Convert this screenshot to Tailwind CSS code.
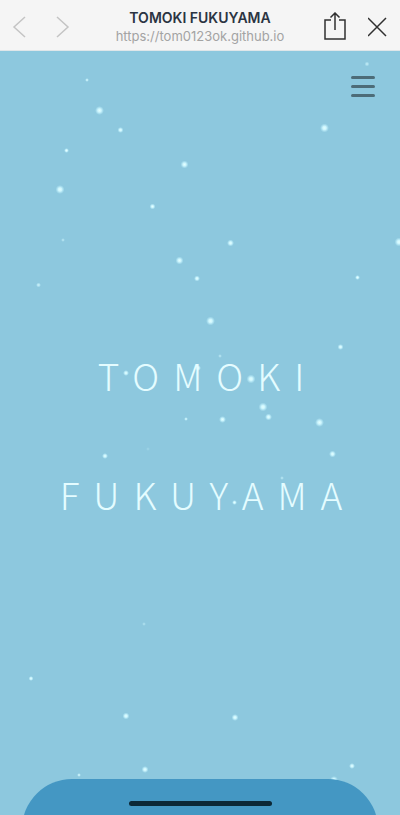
<!DOCTYPE html>
<html lang="ja">
<head>
  <meta charset="UTF-8" />
  <meta name="viewport" content="width=device-width, initial-scale=1.0" />
  <title>TOMOKI FUKUYAMA</title>
  <script src="https://cdn.jsdelivr.net/npm/@tailwindcss/browser@4"></script>
</head>
<body class="min-h-screen flex flex-col bg-[#8dc8de] font-['Inter','Liberation_Sans',sans-serif]">

  <!-- browser bar -->
  <header class="relative z-10 h-[51px] shrink-0 flex items-center justify-between px-3 bg-[#f5f5f5] border-b border-[#dfe6e9]">
    <nav class="flex gap-[30px] pt-1 text-[#c4c4c4]">
      <button type="button" aria-label="Back">
        <svg class="block w-[14px] h-[22px]" viewBox="0 0 14 22" fill="none" stroke="currentColor" stroke-width="1.5"><path d="M13 1 2 11l11 10" /></svg>
      </button>
      <button type="button" aria-label="Forward">
        <svg class="block w-[14px] h-[22px]" viewBox="0 0 14 22" fill="none" stroke="currentColor" stroke-width="1.5"><path d="M1 1l11 10L1 21" /></svg>
      </button>
    </nav>
    <div class="absolute inset-x-20 top-2 text-center">
      <p class="text-[14px] leading-[19px] font-semibold text-[#2b3442]">TOMOKI FUKUYAMA</p>
      <p class="text-[13px] leading-[18px] text-[#a3a3a3]">https://tom0123ok.github.io</p>
    </div>
    <div class="flex items-center gap-5 pt-1 text-[#303030]">
      <button type="button" aria-label="Share">
        <svg class="block w-[24px] h-[30px]" viewBox="0 0 24 30" fill="none" stroke="currentColor" stroke-width="1.5"><path d="M7 8H1v19h20V8h-6M11 18V1M6.500 5.500 11 1l4.500 4.500" /></svg>
      </button>
      <button type="button" aria-label="Close">
        <svg class="block w-[20px] h-[20px]" viewBox="0 0 20 20" fill="none" stroke="currentColor" stroke-width="1.5"><path d="M0 1l18 18M18 1 0 19" /></svg>
      </button>
    </div>
  </header>

  <main class="relative flex-1 flex flex-col overflow-hidden">
    <!-- snow -->
    <svg class="absolute inset-0 w-full h-full" viewBox="0 51 400 764" preserveAspectRatio="xMidYMid slice" aria-hidden="true">
      <defs>
        <radialGradient id="flake">
          <stop offset="0" stop-color="#e4ffff" />
          <stop offset="0.400" stop-color="#ccf5fd" />
          <stop offset="1" stop-color="#b8ecfa" stop-opacity="0" />
        </radialGradient>
      </defs>
      <g fill="url(#flake)">
        <circle cx="99.500" cy="110.500" r="4.500" />
        <circle cx="324.500" cy="128" r="4.500" />
        <circle cx="60" cy="189.500" r="4.500" />
        <circle cx="210.500" cy="321" r="4.500" />
        <circle cx="399" cy="242" r="4.500" />
        <circle cx="251" cy="379" r="4.500" />
        <circle cx="263" cy="407" r="4.500" />
        <circle cx="319.500" cy="422.500" r="4.500" />
        <circle cx="198" cy="368" r="3" />
        <circle cx="184.500" cy="164.500" r="4" />
        <circle cx="179.500" cy="260.500" r="4" />
        <circle cx="230.500" cy="243" r="3.500" />
        <circle cx="222.500" cy="419.500" r="3.500" />
        <circle cx="268.500" cy="417" r="3.500" />
        <circle cx="332.500" cy="454" r="3.500" />
        <circle cx="126" cy="373" r="3" />
        <circle cx="126" cy="716" r="3.500" />
        <circle cx="235" cy="717.500" r="3.500" />
        <circle cx="145" cy="769.500" r="3.500" />
        <circle cx="105" cy="456" r="3" />
        <circle cx="340.500" cy="347" r="3" />
        <circle cx="352" cy="766" r="3" />
        <circle cx="334" cy="780" r="4" />
        <circle cx="152.500" cy="206.500" r="3" />
        <circle cx="197" cy="278.500" r="3" />
        <circle cx="120.500" cy="130" r="3" />
        <circle cx="357.500" cy="277.500" r="2.500" />
        <circle cx="66.500" cy="150.500" r="2.500" />
        <circle cx="31" cy="678.500" r="2.500" />
        <circle cx="234.500" cy="502.500" r="2.500" />
        <circle cx="38.500" cy="285" r="2.500" opacity="0.700" />
        <circle cx="367" cy="64" r="2.500" opacity="0.600" />
        <circle cx="87" cy="80" r="2" opacity="0.800" />
        <circle cx="79" cy="775" r="2" opacity="0.800" />
        <circle cx="186" cy="419" r="2" opacity="0.800" />
        <circle cx="220" cy="356" r="2" opacity="0.500" />
        <circle cx="63" cy="240" r="2" opacity="0.500" />
        <circle cx="282" cy="478" r="2" opacity="0.500" />
        <circle cx="144" cy="624" r="2" opacity="0.400" />
        <circle cx="148" cy="449" r="2" opacity="0.200" />
      </g>
    </svg>

    <button type="button" aria-label="Menu" class="absolute top-[25px] right-[25px] w-6 flex flex-col gap-[6px]">
      <span class="h-[3px] rounded-sm bg-[#4d6c78]"></span>
      <span class="h-[3px] rounded-sm bg-[#4d6c78]"></span>
      <span class="h-[3px] rounded-sm bg-[#4d6c78]"></span>
    </button>

    <section class="relative flex-1 flex items-center justify-center pt-10 pl-4">
      <h1 class="text-center text-[37px] leading-[119px] font-light tracking-[14px] text-[#e4fcff] font-['Noto_Sans_CJK_JP',sans-serif]">TOMOKI<br />FUKUYAMA</h1>
    </section>

    <!-- top of the next section -->
    <section class="relative h-9 mx-[22px] overflow-hidden">
      <div class="h-24 rounded-t-[50px] bg-[#4497c3]"></div>
    </section>
    <div class="absolute bottom-[9px] inset-x-0 mx-auto w-[143px] h-[5px] rounded-full bg-[#0c2836]"></div>
  </main>

</body>
</html>
